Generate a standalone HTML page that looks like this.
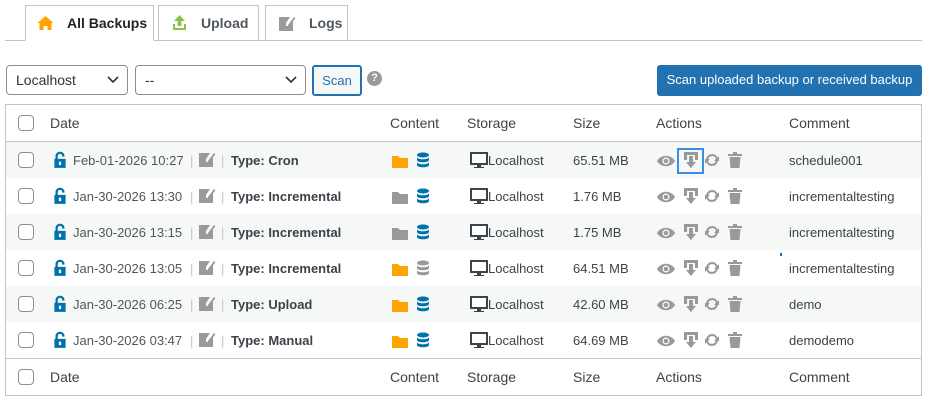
<!DOCTYPE html>
<html><head><meta charset="utf-8"><style>
*{box-sizing:border-box;margin:0;padding:0}
body{width:930px;height:400px;background:#fff;font-family:"Liberation Sans",sans-serif;font-size:13px;color:#3c434a;position:relative;overflow:hidden}
.a{position:absolute}
.tab{position:absolute;top:5px;height:36px;border:1px solid #c3c4c7;background:#fff;font-size:14px;font-weight:bold;color:#50575e;line-height:34px}
.tab.on{color:#1d2327;border-bottom-color:#fff;z-index:2}
.sel{position:absolute;top:65px;height:30px;border:1px solid #8c8f94;border-radius:4px;font-size:14px;line-height:28px;padding-left:9px;color:#2c3338}
.sel svg{position:absolute;right:8px;top:9px}
.row{position:absolute;left:6px;width:915px;height:36px;line-height:37px}
.g{background:#f6f7f7}
.cb{position:absolute;left:12px;top:10px;width:16px;height:16px;border:1px solid #8c8f94;border-radius:4px;background:#fff}
.t{position:absolute;white-space:nowrap}
svg.i{position:absolute}
</style></head><body>
<svg width="0" height="0" style="position:absolute">
<defs>
<symbol id="lock" viewBox="0 0 12 16"><path d="M2 7V4.5a4 4 0 0 1 8 0V5H8V4.5a2 2 0 0 0-4 0V7h7v8H1V7z" fill="#0073aa"/><rect x="5" y="9.5" width="2" height="3" fill="#fff"/></symbol>
<symbol id="edit" viewBox="0 0 18 18"><path d="M1 3h11l-4 6v3h3l4-5v10H1z" fill="#999"/><path d="M10 11l6-8 1.5 1-6 8h-1.5z" fill="#999"/></symbol>
<symbol id="fold" viewBox="0 0 18 16"><path d="M1 3h6l2 2h8v10H1z" fill="currentColor"/></symbol>
<symbol id="db" viewBox="0 0 14 16"><ellipse cx="7" cy="3" rx="6" ry="2.5" fill="currentColor"/><path d="M1 5c0 3 12 3 12 0v3c0 3-12 3-12 0zM1 10c0 3 12 3 12 0v3c0 3-12 3-12 0z" fill="currentColor"/></symbol>
<symbol id="mon" viewBox="0 0 18 16"><rect x="0" y="0" width="18" height="13" fill="#3c434a"/><rect x="2" y="2" width="14" height="9" fill="#fff"/><rect x="7" y="13" width="4" height="2" fill="#3c434a"/><rect x="4" y="15" width="10" height="1" fill="#3c434a"/></symbol>
<symbol id="eye" viewBox="0 0 20 14"><path d="M1 7c4-7 14-7 18 0c-4 7-14 7-18 0z" fill="#999"/><circle cx="10" cy="7" r="3.5" fill="#fff"/><circle cx="10" cy="7" r="2.3" fill="#999"/></symbol>
<symbol id="dl" viewBox="0 0 16 18"><path d="M1 1h14v8h-3V4H4v5H1z" fill="#999"/><path d="M6 5h4v6h3l-5 6-5-6h3z" fill="#999"/></symbol>
<symbol id="ref" viewBox="0 0 16 16"><path d="M8 2a6 6 0 0 1 5.6 3.8L15 4v5h-5l2-2A4 4 0 0 0 4.3 7H2.1A6 6 0 0 1 8 2zM8 14a6 6 0 0 1-5.6-3.8L1 12V7h5l-2 2a4 4 0 0 0 7.7 0h2.2A6 6 0 0 1 8 14z" fill="#999"/></symbol>
<symbol id="trash" viewBox="0 0 14 16"><rect x="0" y="2" width="14" height="2" fill="#999"/><rect x="5" y="0" width="4" height="2" fill="#999"/><path d="M1.5 5h11l-1 11h-9z" fill="#999"/></symbol>
</defs></svg>

<div class="a" style="left:5px;top:40px;width:917px;height:1px;background:#c3c4c7"></div>
<div class="tab on" style="left:25px;width:129px"><svg class="i" style="left:11px;top:9px" width="17" height="16" viewBox="0 0 17 16"><path d="M8.5 1L0.5 8h2v7h4v-4h4v4h4V8h2z" fill="#ffa500"/></svg><span style="position:absolute;left:41px">All Backups</span></div>
<div class="tab" style="left:158px;width:101px"><svg class="i" style="left:13px;top:8px" width="15" height="17" viewBox="0 0 15 17"><path d="M7.5 1L2 7h3.5v5h4V7H13z" fill="#8bc34a"/><path d="M1 10v6h13v-6h-2v4H3v-4z" fill="#8bc34a"/></svg><span style="position:absolute;left:42px">Upload</span></div>
<div class="tab" style="left:265px;width:83px"><svg class="i" style="left:12px;top:8px" width="18" height="18"><use href="#edit"/></svg><span style="position:absolute;left:43px">Logs</span></div>

<div class="sel" style="left:6px;width:122px">Localhost<svg width="12" height="10" viewBox="0 0 12 10"><path d="M1 2l5 5 5-5" stroke="#2c3338" stroke-width="1.6" fill="none"/></svg></div>
<div class="sel" style="left:135px;width:171px">--<svg width="12" height="10" viewBox="0 0 12 10"><path d="M1 2l5 5 5-5" stroke="#2c3338" stroke-width="1.6" fill="none"/></svg></div>
<div class="a" style="left:312px;top:65px;width:50px;height:31px;border:1px solid #2271b1;border-radius:3px;background:#f6f7f7;color:#2271b1;font-size:13px;line-height:29px;text-align:center;box-shadow:0 0 0 1px #2271b1 inset">Scan</div>
<div class="a" style="left:367px;top:71px;width:15px;height:15px;border-radius:50%;background:#999;color:#fff;font-weight:bold;font-size:11px;line-height:15px;text-align:center">?</div>
<div class="a" style="left:657px;top:65px;width:265px;height:31px;border-radius:3px;background:#2271b1;color:#fff;font-size:13px;line-height:30px;text-align:center;white-space:nowrap">Scan uploaded backup or received backup</div>

<div class="a" style="left:5px;top:104px;width:917px;height:292px;border:1px solid #c3c4c7"></div>

<div class="row" style="top:105px;font-size:14px;line-height:36px"><div class="cb"></div><span class="t" style="left:44px">Date</span><span class="t" style="left:384px">Content</span><span class="t" style="left:461px">Storage</span><span class="t" style="left:567px">Size</span><span class="t" style="left:650px">Actions</span><span class="t" style="left:783px">Comment</span></div>
<div class="a" style="left:6px;top:141px;width:915px;height:1px;background:#c3c4c7"></div>
<div class="row" style="top:359px;font-size:14px;line-height:36px"><div class="cb"></div><span class="t" style="left:44px">Date</span><span class="t" style="left:384px">Content</span><span class="t" style="left:461px">Storage</span><span class="t" style="left:567px">Size</span><span class="t" style="left:650px">Actions</span><span class="t" style="left:783px">Comment</span></div>
<div class="a" style="left:6px;top:358px;width:915px;height:1px;background:#c3c4c7"></div>

<div class="row g" style="top:142px"><div class="cb"></div><svg class="i" style="left:47px;top:9px" width="14" height="18"><use href="#lock"/></svg><span class="t" style="left:67px;color:#50575e">Feb-01-2026 10:27</span><span class="t" style="left:184px;color:#c3c4c7">|</span><svg class="i" style="left:192px;top:8px" width="18" height="18"><use href="#edit"/></svg><span class="t" style="left:215px;color:#c3c4c7">|</span><b class="t" style="left:225px">Type: Cron</b><svg class="i" style="left:385px;top:11px;color:#ffa500" width="18" height="16"><use href="#fold"/></svg><svg class="i" style="left:410px;top:10px;color:#0073aa" width="14" height="16"><use href="#db"/></svg><svg class="i" style="left:464px;top:10px" width="18" height="16"><use href="#mon"/></svg><span class="t" style="left:482px">Localhost</span><span class="t" style="left:567px">65.51 MB</span><svg class="i" style="left:650px;top:12px" width="20" height="14"><use href="#eye"/></svg><div class="a" style="left:671px;top:6px;width:27px;height:26px;border:2px solid #3a8ee6"></div><svg class="i" style="left:677px;top:9px" width="16" height="18"><use href="#dl"/></svg><svg class="i" style="left:698px;top:10px" width="16" height="16"><use href="#ref"/></svg><svg class="i" style="left:722px;top:10px" width="14" height="16"><use href="#trash"/></svg><span class="t" style="left:783px">schedule001</span></div>

<div class="row" style="top:178px"><div class="cb"></div><svg class="i" style="left:47px;top:9px" width="14" height="18"><use href="#lock"/></svg><span class="t" style="left:67px;color:#50575e">Jan-30-2026 13:30</span><span class="t" style="left:184px;color:#c3c4c7">|</span><svg class="i" style="left:192px;top:8px" width="18" height="18"><use href="#edit"/></svg><span class="t" style="left:215px;color:#c3c4c7">|</span><b class="t" style="left:225px">Type: Incremental</b><svg class="i" style="left:385px;top:11px;color:#999" width="18" height="16"><use href="#fold"/></svg><svg class="i" style="left:410px;top:10px;color:#0073aa" width="14" height="16"><use href="#db"/></svg><svg class="i" style="left:464px;top:10px" width="18" height="16"><use href="#mon"/></svg><span class="t" style="left:482px">Localhost</span><span class="t" style="left:567px">1.76 MB</span><svg class="i" style="left:650px;top:12px" width="20" height="14"><use href="#eye"/></svg><svg class="i" style="left:677px;top:9px" width="16" height="18"><use href="#dl"/></svg><svg class="i" style="left:698px;top:10px" width="16" height="16"><use href="#ref"/></svg><svg class="i" style="left:722px;top:10px" width="14" height="16"><use href="#trash"/></svg><span class="t" style="left:783px">incrementaltesting</span></div>

<div class="row g" style="top:214px"><div class="cb"></div><svg class="i" style="left:47px;top:9px" width="14" height="18"><use href="#lock"/></svg><span class="t" style="left:67px;color:#50575e">Jan-30-2026 13:15</span><span class="t" style="left:184px;color:#c3c4c7">|</span><svg class="i" style="left:192px;top:8px" width="18" height="18"><use href="#edit"/></svg><span class="t" style="left:215px;color:#c3c4c7">|</span><b class="t" style="left:225px">Type: Incremental</b><svg class="i" style="left:385px;top:11px;color:#999" width="18" height="16"><use href="#fold"/></svg><svg class="i" style="left:410px;top:10px;color:#0073aa" width="14" height="16"><use href="#db"/></svg><svg class="i" style="left:464px;top:10px" width="18" height="16"><use href="#mon"/></svg><span class="t" style="left:482px">Localhost</span><span class="t" style="left:567px">1.75 MB</span><svg class="i" style="left:650px;top:12px" width="20" height="14"><use href="#eye"/></svg><svg class="i" style="left:677px;top:9px" width="16" height="18"><use href="#dl"/></svg><svg class="i" style="left:698px;top:10px" width="16" height="16"><use href="#ref"/></svg><svg class="i" style="left:722px;top:10px" width="14" height="16"><use href="#trash"/></svg><span class="t" style="left:783px">incrementaltesting</span></div>

<div class="row" style="top:250px"><div class="cb"></div><svg class="i" style="left:47px;top:9px" width="14" height="18"><use href="#lock"/></svg><span class="t" style="left:67px;color:#50575e">Jan-30-2026 13:05</span><span class="t" style="left:184px;color:#c3c4c7">|</span><svg class="i" style="left:192px;top:8px" width="18" height="18"><use href="#edit"/></svg><span class="t" style="left:215px;color:#c3c4c7">|</span><b class="t" style="left:225px">Type: Incremental</b><svg class="i" style="left:385px;top:11px;color:#ffa500" width="18" height="16"><use href="#fold"/></svg><svg class="i" style="left:410px;top:10px;color:#999" width="14" height="16"><use href="#db"/></svg><svg class="i" style="left:464px;top:10px" width="18" height="16"><use href="#mon"/></svg><span class="t" style="left:482px">Localhost</span><span class="t" style="left:567px">64.51 MB</span><svg class="i" style="left:650px;top:12px" width="20" height="14"><use href="#eye"/></svg><svg class="i" style="left:677px;top:9px" width="16" height="18"><use href="#dl"/></svg><svg class="i" style="left:698px;top:10px" width="16" height="16"><use href="#ref"/></svg><svg class="i" style="left:722px;top:10px" width="14" height="16"><use href="#trash"/></svg><span class="t" style="left:783px">incrementaltesting</span></div>

<div class="row g" style="top:286px"><div class="cb"></div><svg class="i" style="left:47px;top:9px" width="14" height="18"><use href="#lock"/></svg><span class="t" style="left:67px;color:#50575e">Jan-30-2026 06:25</span><span class="t" style="left:184px;color:#c3c4c7">|</span><svg class="i" style="left:192px;top:8px" width="18" height="18"><use href="#edit"/></svg><span class="t" style="left:215px;color:#c3c4c7">|</span><b class="t" style="left:225px">Type: Upload</b><svg class="i" style="left:385px;top:11px;color:#ffa500" width="18" height="16"><use href="#fold"/></svg><svg class="i" style="left:410px;top:10px;color:#0073aa" width="14" height="16"><use href="#db"/></svg><svg class="i" style="left:464px;top:10px" width="18" height="16"><use href="#mon"/></svg><span class="t" style="left:482px">Localhost</span><span class="t" style="left:567px">42.60 MB</span><svg class="i" style="left:650px;top:12px" width="20" height="14"><use href="#eye"/></svg><svg class="i" style="left:677px;top:9px" width="16" height="18"><use href="#dl"/></svg><svg class="i" style="left:698px;top:10px" width="16" height="16"><use href="#ref"/></svg><svg class="i" style="left:722px;top:10px" width="14" height="16"><use href="#trash"/></svg><span class="t" style="left:783px">demo</span></div>

<div class="row" style="top:322px"><div class="cb"></div><svg class="i" style="left:47px;top:9px" width="14" height="18"><use href="#lock"/></svg><span class="t" style="left:67px;color:#50575e">Jan-30-2026 03:47</span><span class="t" style="left:184px;color:#c3c4c7">|</span><svg class="i" style="left:192px;top:8px" width="18" height="18"><use href="#edit"/></svg><span class="t" style="left:215px;color:#c3c4c7">|</span><b class="t" style="left:225px">Type: Manual</b><svg class="i" style="left:385px;top:11px;color:#ffa500" width="18" height="16"><use href="#fold"/></svg><svg class="i" style="left:410px;top:10px;color:#0073aa" width="14" height="16"><use href="#db"/></svg><svg class="i" style="left:464px;top:10px" width="18" height="16"><use href="#mon"/></svg><span class="t" style="left:482px">Localhost</span><span class="t" style="left:567px">64.69 MB</span><svg class="i" style="left:650px;top:12px" width="20" height="14"><use href="#eye"/></svg><svg class="i" style="left:677px;top:9px" width="16" height="18"><use href="#dl"/></svg><svg class="i" style="left:698px;top:10px" width="16" height="16"><use href="#ref"/></svg><svg class="i" style="left:722px;top:10px" width="14" height="16"><use href="#trash"/></svg><span class="t" style="left:783px">demodemo</span></div>
<div class="a" style="left:780px;top:253px;width:2px;height:3px;background:#2271b1"></div>
</body></html>
